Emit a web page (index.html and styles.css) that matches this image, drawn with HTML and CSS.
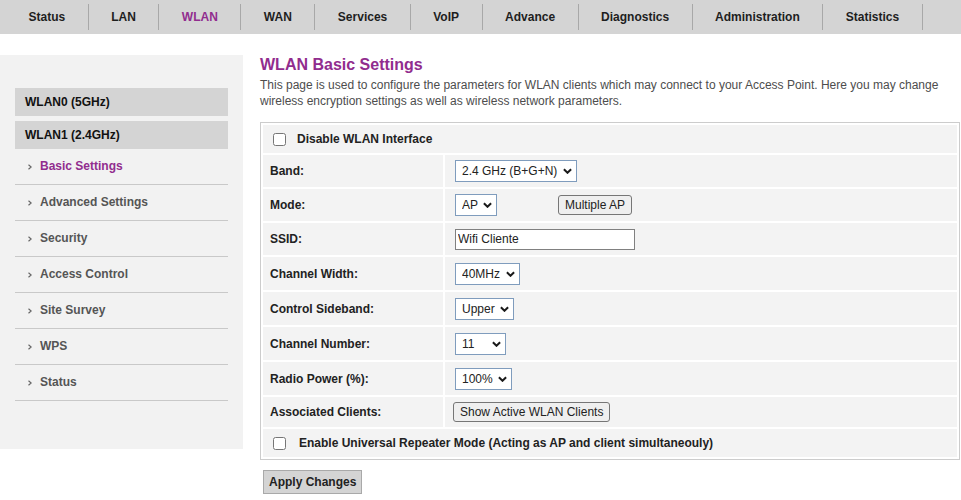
FILE: index.html
```html
<!DOCTYPE html>
<html>
<head>
<meta charset="utf-8">
<title>WLAN Basic Settings</title>
<link rel="stylesheet" href="styles.css">
</head>
<body>
<nav class="topnav">
  <a class="nav-item">Status</a>
  <a class="nav-item">LAN</a>
  <a class="nav-item active">WLAN</a>
  <a class="nav-item">WAN</a>
  <a class="nav-item">Services</a>
  <a class="nav-item">VoIP</a>
  <a class="nav-item">Advance</a>
  <a class="nav-item">Diagnostics</a>
  <a class="nav-item">Administration</a>
  <a class="nav-item">Statistics</a>
</nav>
<div class="layout">
  <aside class="sidebar">
    <div class="side-head">WLAN0 (5GHz)</div>
    <div class="side-head second">WLAN1 (2.4GHz)</div>
    <ul class="side-menu">
      <li class="side-item active"><svg class="bullet" viewBox="0 0 4 6" width="4" height="6"><polyline points="0.5,0.8 3.2,3 0.5,5.2" fill="none" stroke="currentColor" stroke-width="1.2"/></svg>Basic Settings</li>
      <li class="side-item"><svg class="bullet" viewBox="0 0 4 6" width="4" height="6"><polyline points="0.5,0.8 3.2,3 0.5,5.2" fill="none" stroke="currentColor" stroke-width="1.2"/></svg>Advanced Settings</li>
      <li class="side-item"><svg class="bullet" viewBox="0 0 4 6" width="4" height="6"><polyline points="0.5,0.8 3.2,3 0.5,5.2" fill="none" stroke="currentColor" stroke-width="1.2"/></svg>Security</li>
      <li class="side-item"><svg class="bullet" viewBox="0 0 4 6" width="4" height="6"><polyline points="0.5,0.8 3.2,3 0.5,5.2" fill="none" stroke="currentColor" stroke-width="1.2"/></svg>Access Control</li>
      <li class="side-item"><svg class="bullet" viewBox="0 0 4 6" width="4" height="6"><polyline points="0.5,0.8 3.2,3 0.5,5.2" fill="none" stroke="currentColor" stroke-width="1.2"/></svg>Site Survey</li>
      <li class="side-item"><svg class="bullet" viewBox="0 0 4 6" width="4" height="6"><polyline points="0.5,0.8 3.2,3 0.5,5.2" fill="none" stroke="currentColor" stroke-width="1.2"/></svg>WPS</li>
      <li class="side-item"><svg class="bullet" viewBox="0 0 4 6" width="4" height="6"><polyline points="0.5,0.8 3.2,3 0.5,5.2" fill="none" stroke="currentColor" stroke-width="1.2"/></svg>Status</li>
    </ul>
  </aside>
  <main class="content">
    <h2 class="title">WLAN Basic Settings</h2>
    <p class="intro">This page is used to configure the parameters for WLAN clients which may connect to your Access Point. Here you may change wireless encryption settings as well as wireless network parameters.</p>
    <table class="form-table">
      <tr class="row-check">
        <td colspan="2" class="check-cell"><label class="check"><input type="checkbox"><span>Disable WLAN Interface</span></label></td>
      </tr>
      <tr class="row-a">
        <td class="label">Band:</td>
        <td class="value"><span class="sel w-band"><select><option>2.4 GHz (B+G+N)</option></select><svg class="chev" viewBox="0 0 10 6" width="9" height="6"><polyline points="1,1 5,5 9,1" fill="none" stroke="currentColor" stroke-width="2.2"/></svg></span></td>
      </tr>
      <tr class="row-a">
        <td class="label">Mode:</td>
        <td class="value"><span class="sel w-mode"><select><option>AP</option></select><svg class="chev" viewBox="0 0 10 6" width="9" height="6"><polyline points="1,1 5,5 9,1" fill="none" stroke="currentColor" stroke-width="2.2"/></svg></span><button class="btn btn-multi">Multiple AP</button></td>
      </tr>
      <tr class="row-a">
        <td class="label">SSID:</td>
        <td class="value"><input class="text-input" type="text" value="Wifi Cliente"></td>
      </tr>
      <tr class="row-b">
        <td class="label">Channel Width:</td>
        <td class="value"><span class="sel w-cw"><select><option>40MHz</option></select><svg class="chev" viewBox="0 0 10 6" width="9" height="6"><polyline points="1,1 5,5 9,1" fill="none" stroke="currentColor" stroke-width="2.2"/></svg></span></td>
      </tr>
      <tr class="row-b">
        <td class="label">Control Sideband:</td>
        <td class="value"><span class="sel w-cs"><select><option>Upper</option></select><svg class="chev" viewBox="0 0 10 6" width="9" height="6"><polyline points="1,1 5,5 9,1" fill="none" stroke="currentColor" stroke-width="2.2"/></svg></span></td>
      </tr>
      <tr class="row-b">
        <td class="label">Channel Number:</td>
        <td class="value"><span class="sel w-cn"><select><option>11</option></select><svg class="chev" viewBox="0 0 10 6" width="9" height="6"><polyline points="1,1 5,5 9,1" fill="none" stroke="currentColor" stroke-width="2.2"/></svg></span></td>
      </tr>
      <tr class="row-b">
        <td class="label">Radio Power (%):</td>
        <td class="value"><span class="sel w-rp"><select><option>100%</option></select><svg class="chev" viewBox="0 0 10 6" width="9" height="6"><polyline points="1,1 5,5 9,1" fill="none" stroke="currentColor" stroke-width="2.2"/></svg></span></td>
      </tr>
      <tr class="row-btn">
        <td class="label">Associated Clients:</td>
        <td class="value"><button class="btn btn-clients">Show Active WLAN Clients</button></td>
      </tr>
      <tr class="row-check">
        <td colspan="2" class="check-cell"><label class="check wide"><input type="checkbox"><span>Enable Universal Repeater Mode (Acting as AP and client simultaneouly)</span></label></td>
      </tr>
    </table>
    <button class="apply">Apply Changes</button>
  </main>
</div>
</body>
</html>
```

FILE: styles.css
```css
* { box-sizing: border-box; }

body {
  margin: 0;
  background: #ffffff;
  font-family: "Liberation Sans", Arial, sans-serif;
  font-size: 12px;
  color: #222;
}

.topnav {
  display: flex;
  height: 34px;
  padding-left: 6px;
  background: #d4d4d4;
}

.nav-item {
  display: block;
  height: 26px;
  margin-top: 4px;
  padding: 0 22.5px;
  line-height: 26px;
  border-right: 1px solid #a8a8a8;
  font-weight: bold;
  font-size: 12px;
  color: #1e1e1e;
  cursor: pointer;
}

.nav-item.active { color: #912c8e; }

.layout {
  display: flex;
  align-items: flex-start;
  margin-top: 21px;
}

.sidebar {
  width: 243px;
  flex: 0 0 243px;
  background: #f2f2f2;
  padding: 33px 15px 48px;
}

.side-head {
  height: 28px;
  line-height: 28px;
  padding-left: 10px;
  background: #d4d4d4;
  font-weight: bold;
  color: #111;
}

.side-head.second { margin-top: 5px; }

.side-menu {
  list-style: none;
  margin: 0;
  padding: 0;
}

.side-item {
  display: flex;
  align-items: center;
  height: 36px;
  padding-left: 13px;
  padding-bottom: 1px;
  border-bottom: 1px solid #c9c9c9;
  font-weight: bold;
  color: #555;
}

.side-item .bullet {
  color: #666;
  margin-right: 8px;
  margin-top: 1px;
}

.side-item.active { color: #912c8e; }

.content {
  flex: 1;
  margin-left: 17px;
  padding-right: 1px;
}

.title {
  margin: 0 0 2px;
  font-size: 16px;
  line-height: 20px;
  font-weight: bold;
  color: #912c8e;
}

.intro {
  margin: 0;
  line-height: 16px;
  color: #4d4d4d;
}

.form-table {
  width: 700px;
  margin-top: 13px;
  border: 1px solid #cccccc;
  border-collapse: separate;
  border-spacing: 2px;
}

.form-table td {
  background: #f3f3f3;
  padding: 0;
  vertical-align: middle;
}

.row-check td { height: 28px; }
.row-a td { height: 32px; }
.row-b td { height: 33px; }
.row-btn td { height: 30px; }

.form-table td.label {
  width: 180px;
  padding-left: 7px;
  font-weight: bold;
  color: #222;
}

.form-table td.value {
  padding-left: 10px;
}

.check {
  display: flex;
  align-items: center;
  padding-left: 10px;
  font-weight: bold;
  color: #222;
}

.check input {
  width: 13px;
  height: 13px;
  margin: 0 11px 0 0;
}

.check.wide input { margin-right: 13px; }

.sel {
  position: relative;
  display: inline-block;
  vertical-align: middle;
  height: 22px;
}

.sel select {
  -webkit-appearance: none;
  appearance: none;
  width: 100%;
  height: 22px;
  padding: 0 16px 0 6px;
  border: 1px solid #7f9cbd;
  border-radius: 0;
  background: #fff;
  font-family: "Liberation Sans", Arial, sans-serif;
  font-size: 12px;
  color: #222;
}

.sel .chev {
  position: absolute;
  right: 5px;
  top: 8px;
  color: #1a1a1a;
  pointer-events: none;
}

.w-band { width: 122px; }
.w-mode { width: 42px; }
.w-cw { width: 65px; }
.w-cs { width: 59px; }
.w-cn { width: 51px; }
.w-rp { width: 57px; }

.btn {
  height: 20px;
  padding: 0 6px;
  border: 1px solid #767676;
  border-radius: 3px;
  background: #efefef;
  font-family: "Liberation Sans", Arial, sans-serif;
  font-size: 12px;
  color: #222;
  vertical-align: middle;
}

.btn-multi { margin-left: 61px; }
.btn-clients { margin-left: -2px; }

.text-input {
  width: 180px;
  height: 21px;
  padding: 0 2px;
  border: 1px solid #808080;
  background: #fff;
  font-family: "Liberation Sans", Arial, sans-serif;
  font-size: 12px;
  color: #222;
  vertical-align: middle;
}

.apply {
  display: block;
  height: 24px;
  margin: 10px 0 0 3px;
  padding: 0 5px;
  border: 1px solid #a9a9a9;
  border-radius: 0;
  background: #d4d4d4;
  font-family: "Liberation Sans", Arial, sans-serif;
  font-size: 12px;
  font-weight: bold;
  color: #222;
}
```
